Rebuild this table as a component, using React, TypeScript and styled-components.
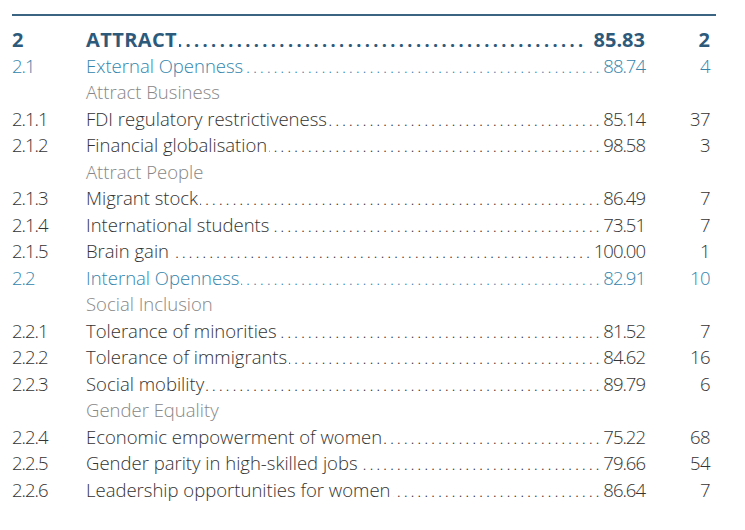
import { FC } from 'react'
import styled, { createGlobalStyle } from 'styled-components'

type Level = 'pillar' | 'sub' | 'group' | 'item'

interface Row {
  level: Level
  code?: string
  label: string
  score?: string
  rank?: string
}

const rows: Row[] = [
  { level: 'pillar', code: '2', label: 'ATTRACT', score: '85.83', rank: '2' },
  { level: 'sub', code: '2.1', label: 'External Openness', score: '88.74', rank: '4' },
  { level: 'group', label: 'Attract Business' },
  { level: 'item', code: '2.1.1', label: 'FDI regulatory restrictiveness', score: '85.14', rank: '37' },
  { level: 'item', code: '2.1.2', label: 'Financial globalisation', score: '98.58', rank: '3' },
  { level: 'group', label: 'Attract People' },
  { level: 'item', code: '2.1.3', label: 'Migrant stock', score: '86.49', rank: '7' },
  { level: 'item', code: '2.1.4', label: 'International students', score: '73.51', rank: '7' },
  { level: 'item', code: '2.1.5', label: 'Brain gain', score: '100.00', rank: '1' },
  { level: 'sub', code: '2.2', label: 'Internal Openness', score: '82.91', rank: '10' },
  { level: 'group', label: 'Social Inclusion' },
  { level: 'item', code: '2.2.1', label: 'Tolerance of minorities', score: '81.52', rank: '7' },
  { level: 'item', code: '2.2.2', label: 'Tolerance of immigrants', score: '84.62', rank: '16' },
  { level: 'item', code: '2.2.3', label: 'Social mobility', score: '89.79', rank: '6' },
  { level: 'group', label: 'Gender Equality' },
  { level: 'item', code: '2.2.4', label: 'Economic empowerment of women', score: '75.22', rank: '68' },
  { level: 'item', code: '2.2.5', label: 'Gender parity in high-skilled jobs', score: '79.66', rank: '54' },
  { level: 'item', code: '2.2.6', label: 'Leadership opportunities for women', score: '86.64', rank: '7' },
]

const colors: Record<Level, string> = {
  pillar: '#2d5a7b',
  sub: '#3585ad',
  group: '#878787',
  item: '#333333',
}

const App: FC = () => {
  return (
    <>
      <GlobalStyle />
      <Page>
        <Rule />
        <Table>
          {rows.map((row, i) => (
            <Line key={i} level={row.level}>
              <Code level={row.level}>{row.code}</Code>
              <Entry>
                <Label>{row.label}</Label>
                {row.score && (
                  <>
                    <Leader level={row.level} />
                    <Score level={row.level}>{row.score}</Score>
                  </>
                )}
              </Entry>
              <Rank level={row.level}>{row.rank}</Rank>
            </Line>
          ))}
        </Table>
      </Page>
    </>
  )
}

const GlobalStyle = createGlobalStyle`
  html, body {
    margin: 0;
    background: #ffffff;
  }
  body {
    font-family: "Open Sans", "Noto Sans", sans-serif;
  }
`

const Page = styled.div`
  width: 745px;
  height: 530px;
  padding: 14px 29px 0 12px;
  box-sizing: border-box;
`

const Rule = styled.div`
  height: 2px;
  background: #3b6482;
  margin-bottom: 9.5px;
`

const Table = styled.div`
  display: flex;
  flex-direction: column;
  padding-right: 6px;
`

const Line = styled.div<{ level: Level }>`
  display: grid;
  grid-template-columns: 74px 1fr 65px;
  height: 26.5px;
  align-items: center;
  font-size: ${({ level }) => (level === 'pillar' ? '20px' : '18.5px')};
  font-weight: ${({ level }) => (level === 'pillar' ? 700 : 300)};
  color: ${({ level }) => colors[level]};
  white-space: nowrap;
  letter-spacing: ${({ level }) => (level === 'pillar' ? '0.4px' : '0')};
`

const Code = styled.span<{ level: Level }>`
  letter-spacing: ${({ level }) => (level === 'pillar' ? '0' : '-1px')};
`

const Entry = styled.span`
  display: flex;
  align-items: baseline;
  min-width: 0;
`

const Label = styled.span`
  flex: none;
`

const Leader = styled.span<{ level: Level }>`
  flex: 1;
  display: flex;
  justify-content: flex-end;
  overflow: hidden;
  margin: 0 ${({ level }) => (level === 'pillar' ? '7px' : '1px')} 0 2px;

  &::before {
    content: '${'.'.repeat(160)}';
    flex: none;
    font-size: ${({ level }) => (level === 'pillar' ? '18px' : '17px')};
    letter-spacing: ${({ level }) => (level === 'pillar' ? '3.4px' : '2.8px')};
  }
`

const Score = styled.span<{ level: Level }>`
  flex: none;
  letter-spacing: ${({ level }) => (level === 'pillar' ? '0' : '-1px')};
`

const Rank = styled.span<{ level: Level }>`
  text-align: right;
  letter-spacing: ${({ level }) => (level === 'pillar' ? '0' : '-0.5px')};
`

export default App
